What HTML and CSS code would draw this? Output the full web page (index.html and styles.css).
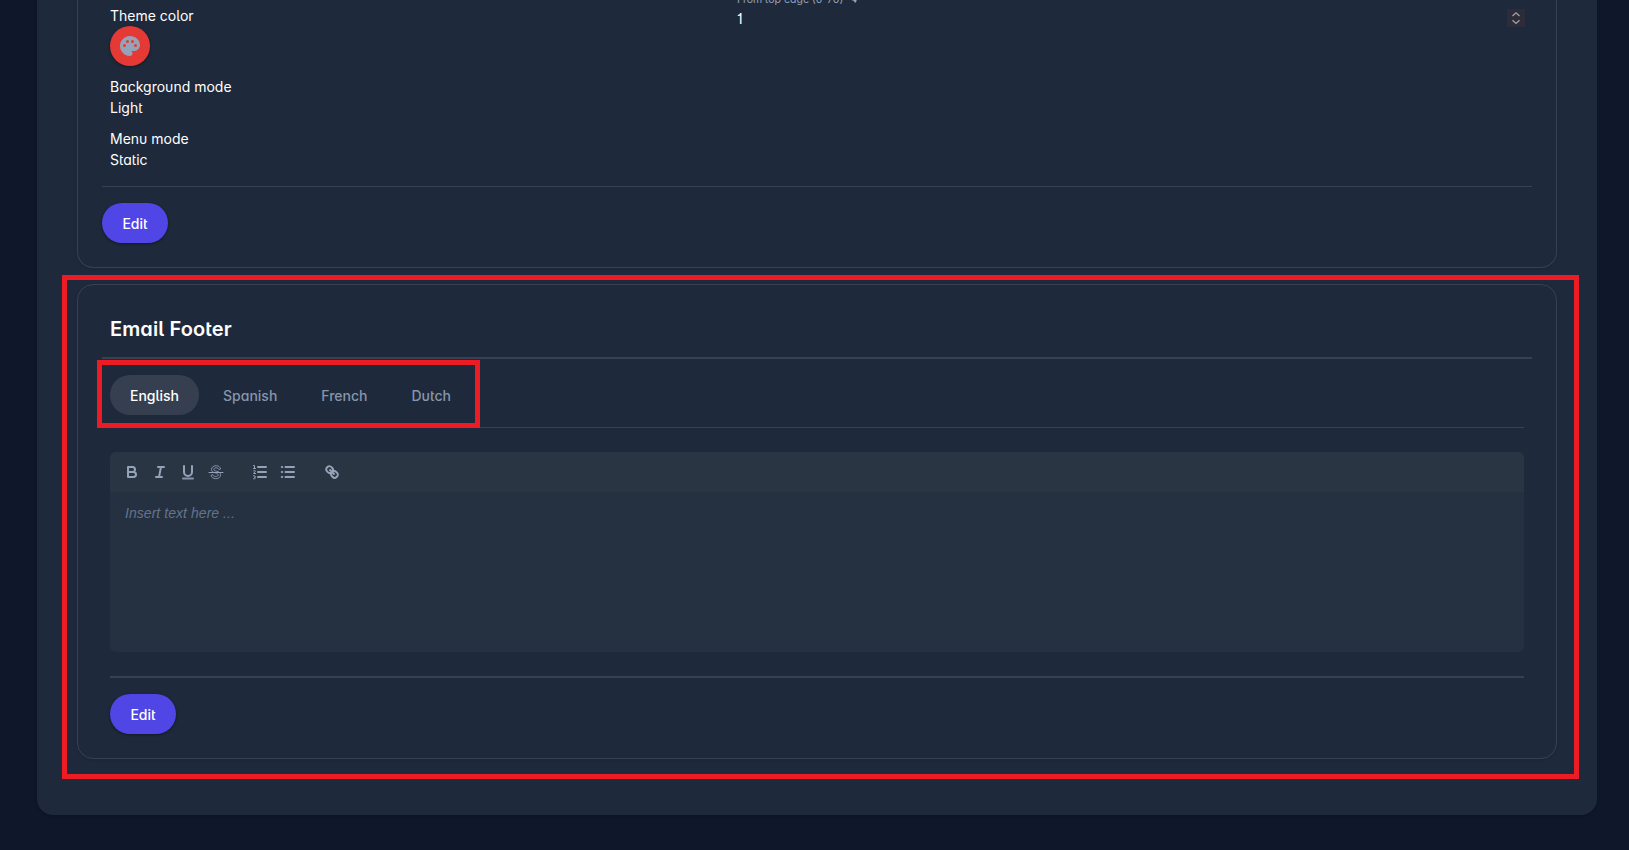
FILE: index.html
```html
<!DOCTYPE html>
<html lang="en">
<head>
    <meta charset="UTF-8">
    <meta name="viewport" content="width=device-width, initial-scale=1.0">
    <title>Settings</title>
    <link rel="stylesheet" href="styles.css">
</head>
<body>

    <main class="panel">

        <!-- Theme settings -->
        <section class="card card-theme">
            <div class="columns">
                <div class="column">
                    <div class="field">
                        <div>Theme color</div>
                        <button class="color-btn">
                            <svg viewBox="0 0 24 24" width="24" height="24"><path fill="currentColor" fill-rule="evenodd" d="M12 2C6.500 2 2 6.500 2 12s4.500 10 10 10c1.400 0 2.500-1.100 2.500-2.500 0-.600-.200-1.200-.600-1.600a.500.500 0 0 1 .400-.900H16c3.300 0 6-2.700 6-6C22 6 17.500 2 12 2zM6.500 13a1.500 1.500 0 1 1 0-3 1.500 1.500 0 0 1 0 3zm3-4a1.500 1.500 0 1 1 0-3 1.500 1.500 0 0 1 0 3zm5 0a1.500 1.500 0 1 1 0-3 1.500 1.500 0 0 1 0 3zm3 4a1.500 1.500 0 1 1 0-3 1.500 1.500 0 0 1 0 3z"/></svg>
                        </button>
                    </div>
                    <div class="field">
                        <div>Background mode</div>
                        <div>Light</div>
                    </div>
                    <div class="field">
                        <div>Menu mode</div>
                        <div>Static</div>
                    </div>
                </div>
                <div class="column column-input">
                    <div class="label">From top edge (0-70)
                        <svg viewBox="0 0 10 10" width="10" height="10"><path fill="currentColor" d="M1 0h8v4.500L7.500 6.500 7 8.500H5.500L5 7 1 5.500z"/></svg>
                    </div>
                    <div class="number">
                        <span>1</span>
                        <span class="stepper">
                            <svg viewBox="0 0 18 18" width="18" height="18"><path fill="none" stroke="currentColor" stroke-width="1.300" d="M5.500 7 9 3.800 12.500 7M5.500 11.200 9 14.400l3.500-3.200"/></svg>
                        </span>
                    </div>
                </div>
            </div>
            <hr>
            <button class="btn">Edit</button>
        </section>

        <!-- Email footer -->
        <section class="card card-footer">
            <h2>Email Footer</h2>
            <hr class="thick">
            <div class="content">
                <nav class="tabs">
                    <button class="tab active">English</button>
                    <button class="tab">Spanish</button>
                    <button class="tab">French</button>
                    <button class="tab">Dutch</button>
                    <div class="highlight highlight-tabs"></div>
                </nav>
                <div class="editor">
                    <div class="toolbar">
                        <span class="tools">
                            <svg viewBox="0 0 18 18"><path class="line" d="M5 4h4.500a2.500 2.500 0 0 1 0 5H5zM5 9h5.500a2.500 2.500 0 0 1 0 5H5z"/></svg>
                            <svg viewBox="0 0 18 18"><path class="line" d="M7 4h6M5 14h6M8 14l2-10"/></svg>
                            <svg viewBox="0 0 18 18"><path class="line" d="M5 3v6a4 4 0 0 0 8 0V3"/><rect class="soft" x="3" y="14.500" width="12" height="2" rx="1"/></svg>
                            <svg viewBox="0 0 18 18"><path class="strike" d="M2 9.500h14"/><path class="strike outline" d="M13.500 5.500C12.800 3.600 11.300 2.700 9.300 2.700 6.500 2.700 4.500 4 4.500 6.500c0 2.200 1.800 2.900 4 3.400 1.600.4 2.600.8 2.600 2 0 1-.9 1.600-2.300 1.600-1.600 0-2.500-.6-3-1.900l-1.800.7c.7 2.100 2.300 3.400 4.800 3.400 2.800 0 4.700-1.400 4.700-3.900 0-2.200-1.700-3-4.200-3.600-1.700-.4-2.400-.8-2.400-1.800s.9-1.600 2.300-1.600c1.300 0 2.100.5 2.600 1.400z"/></svg>
                        </span>
                        <span class="tools">
                            <svg viewBox="0 0 18 18"><path class="line" d="M7 4h8M7 9h8M7 14h8"/><path class="thin" d="M2.500 2.500h1v3M2.500 5.500h2M2.500 7.800c.500-.600 2-.500 1.800.500L2.600 10.500h2M2.600 12.700c2-.600 2.300 1.500.8 1.500 1.600 0 1.400 2.200-.8 1.600"/></svg>
                            <svg viewBox="0 0 18 18"><path class="line" d="M6.500 4H15M6.500 9H15M6.500 14H15M2.800 4h.4M2.800 9h.4M2.800 14h.4"/></svg>
                        </span>
                        <span class="tools">
                            <svg viewBox="0 0 18 18"><path class="line" d="M7 7l4 4M8.900 4.577a3.476 3.476 0 0 1 .360 4.679A3.476 3.476 0 0 1 4.577 8.900C3.185 7.500 2.035 6.400 4.217 4.217S7.500 3.185 8.900 4.577zM13.423 9.100a3.476 3.476 0 0 0-4.679-.360 3.476 3.476 0 0 0 .360 4.679c1.392 1.392 2.500 2.542 4.679.360s1.031-3.283-.360-4.679z"/></svg>
                        </span>
                    </div>
                    <div class="text">Insert text here ...</div>
                </div>
                <hr class="thick">
                <button class="btn">Edit</button>
            </div>
            <div class="highlight highlight-card"></div>
        </section>

    </main>

</body>
</html>
```
FILE: styles.css
```css
* {
    box-sizing: border-box;
}

body {
    margin: 0;
    height: 850px;
    overflow: hidden;
    background-color: #0f172a;
    color: #fff;
    font-family: Inter, "Liberation Sans", sans-serif;
    font-feature-settings: "cv11", "salt";
    font-size: 14px;
    line-height: 21px;
}

button {
    border: none;
    padding: 0;
    font: inherit;
    font-feature-settings: inherit;
    color: inherit;
}

hr {
    height: 1px;
    margin: 0;
    border: none;
    background-color: #374151;
}

hr.thick {
    height: 2px;
}

.panel {
    height: 815px;
    margin: 0 32px 0 37px;
    padding: 0 40px;
    background-color: #1e293b;
    border-radius: 0 0 16px 16px;
    box-shadow: 0 1px 3px rgba(0, 0, 0, 0.2);
}

.card {
    position: relative;
    padding: 0 24px;
    border: 1px solid #374151;
    border-radius: 16px;
    box-shadow: 0 1px 3px rgba(0, 0, 0, 0.1);
}

.card-theme {
    height: 268px;
    border-top: none;
    border-radius: 0 0 16px 16px;
}

.columns {
    display: flex;
    height: 186px;
    padding: 5px 8px 0;
}

.column {
    width: 627px;
}

.column-input {
    flex: 1;
    width: auto;
    margin: -16px -1px 0 0;
}

.field {
    margin-bottom: 10px;
}

.color-btn {
    display: flex;
    align-items: center;
    justify-content: center;
    width: 40px;
    height: 40px;
    border-radius: 50%;
    background-color: #e53935;
    color: #94a3b8;
    box-shadow: 0 1px 3px rgba(0, 0, 0, 0.4);
}

.label {
    display: flex;
    align-items: center;
    gap: 6px;
    height: 20px;
    color: #94a3b8;
    font-size: 10.5px;
}

.number {
    display: flex;
    justify-content: space-between;
    align-items: center;
    height: 18px;
}

.stepper {
    width: 18px;
    height: 18px;
    background-color: #2c2d38;
    color: #a1a1aa;
}

.stepper svg {
    display: block;
}

.btn {
    display: block;
    width: 66px;
    height: 40px;
    margin-top: 16px;
    border-radius: 20px;
    background-color: #4f46e5;
    font-weight: 500;
    box-shadow: 0 1px 3px rgba(0, 0, 0, 0.4);
}

/* Email footer card */
.card-footer {
    height: 475px;
    margin-top: 16px;
}

h2 {
    height: 72px;
    margin: 0;
    padding: 29px 8px 0;
    font-size: 20px;
    line-height: 30px;
    font-weight: 600;
    letter-spacing: 0.1px;
}

.content {
    padding: 0 8px;
}

.tabs {
    position: relative;
    display: flex;
    gap: 4px;
    height: 69px;
    padding-top: 16px;
    border-bottom: 1px solid #374151;
}

.tab {
    height: 40px;
    padding: 0 20px;
    border-radius: 20px;
    background: none;
    color: #8795aa;
    font-weight: 500;
}

.tab.active {
    background-color: #363f4f;
    color: #fff;
}

.editor {
    height: 200px;
    margin: 24px 0;
    border-radius: 6px;
    overflow: hidden;
    background-color: #253040;
}

.toolbar {
    display: flex;
    gap: 16px;
    height: 40px;
    padding: 8px;
    background-color: #2a3544;
}

.tools {
    display: flex;
}

.tools svg {
    width: 28px;
    height: 24px;
    padding: 3px 5px;
}

.line,
.strike,
.thin {
    fill: none;
    stroke: #94a3b8;
    stroke-width: 2;
    stroke-linecap: round;
    stroke-linejoin: round;
}

.strike,
.thin {
    stroke-width: 1;
}

.outline {
    opacity: 0.85;
}

.soft {
    fill: #94a3b8;
    opacity: 0.85;
}

.text {
    padding: 12px 15px;
    color: #64748b;
    font-family: "Liberation Sans", Arial, sans-serif;
    font-size: 14px;
    line-height: 18px;
    font-style: italic;
    letter-spacing: 0.05px;
}

/* Red marker frames */
.highlight {
    position: absolute;
    border: 5px solid #ed1c24;
    pointer-events: none;
}

.highlight-card {
    top: -10px;
    left: -16px;
    width: 1517px;
    height: 504px;
}

.highlight-tabs {
    top: 1px;
    left: -13px;
    width: 383px;
    height: 68px;
}
```
